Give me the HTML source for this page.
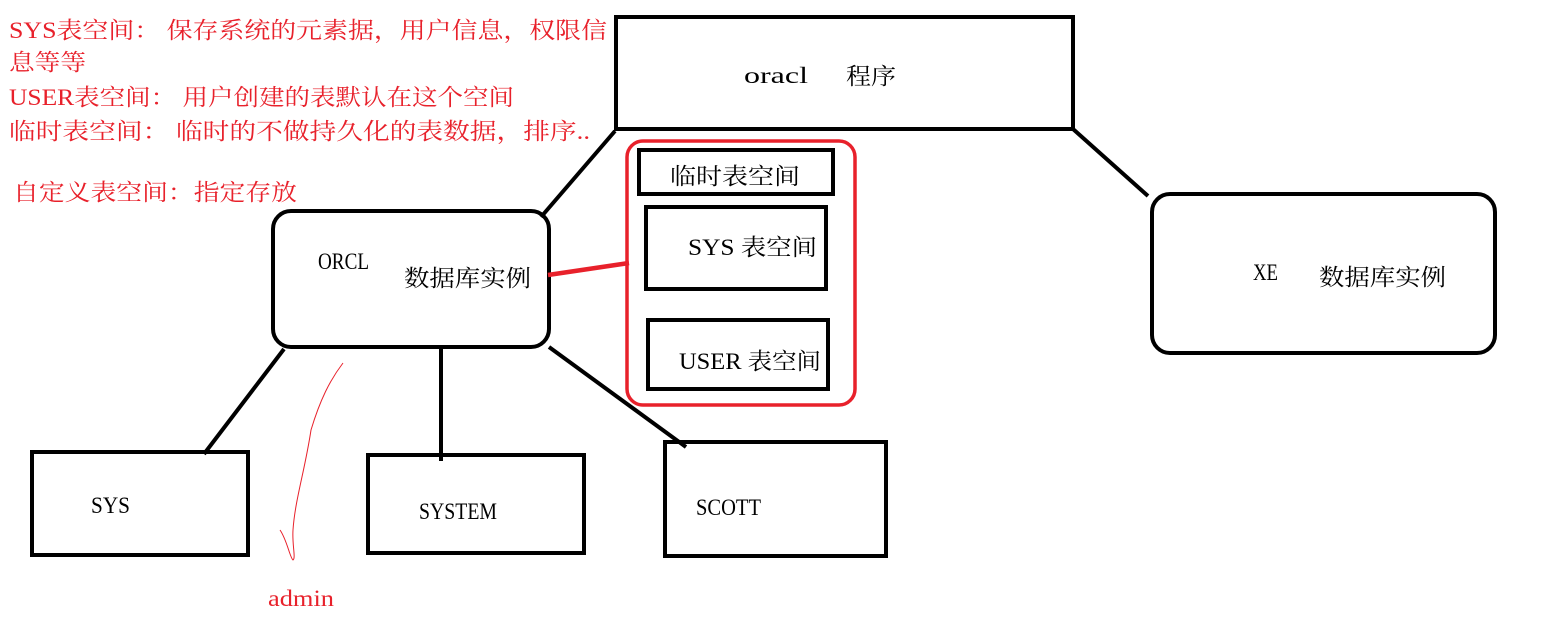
<html><body style="margin:0;background:#fff">
<svg width="1544" height="623" xmlns="http://www.w3.org/2000/svg" style="display:block">
<g fill="none" stroke="#000" stroke-width="4">
<rect x="616" y="17" width="457" height="112"/>
<rect x="273" y="211" width="276" height="136" rx="18"/>
<rect x="1152" y="194" width="343" height="159" rx="18"/>
<rect x="639" y="150" width="194" height="44"/>
<rect x="646" y="207" width="180" height="82"/>
<rect x="648" y="320" width="180" height="69"/>
<rect x="32" y="452" width="216" height="103"/>
<rect x="368" y="455" width="216" height="98"/>
<rect x="665" y="442" width="221" height="114"/>
<path d="M541 217L615 131M1073 129L1148 196M284 349L204 454M441 349L441 461M549 347L686 447"/>
</g>
<rect x="627" y="141" width="228" height="264" rx="16" fill="none" stroke="#e8212b" stroke-width="3.5"/>
<path d="M548 275L629 263" stroke="#e8212b" stroke-width="4.5"/>
<path d="M343 363C330 380 320 400 311 430C305 470 295 500 293 530C292 545 296 558 293 560C290 558 287 540 280 530" fill="none" stroke="#e8212b" stroke-width="1"/>
<g font-family="'Liberation Serif','Noto Serif CJK SC',serif" fill="#e8212b" font-size="23" lengthAdjust="spacingAndGlyphs">
<text x="9" y="38" textLength="598" lengthAdjust="spacingAndGlyphs">SYS表空间：  保存系统的元素据，用户信息，权限信</text>
<text x="9" y="70" textLength="77" lengthAdjust="spacingAndGlyphs">息等等</text>
<text x="9" y="105" textLength="505" lengthAdjust="spacingAndGlyphs">USER表空间：  用户创建的表默认在这个空间</text>
<text x="9" y="139" textLength="581" lengthAdjust="spacingAndGlyphs">临时表空间：  临时的不做持久化的表数据，排序..</text>
<text x="13" y="200" textLength="284" lengthAdjust="spacingAndGlyphs">自定义表空间：指定存放</text>
<text x="268" y="606" textLength="66" lengthAdjust="spacingAndGlyphs">admin</text>
</g>
<g font-family="'Liberation Serif','Noto Serif CJK SC',serif" fill="#000" font-size="23">
<text x="744" y="83" textLength="64" lengthAdjust="spacingAndGlyphs">oracl</text>
<text x="846" y="84" textLength="50" lengthAdjust="spacingAndGlyphs">程序</text>
<text x="318" y="269" textLength="51" lengthAdjust="spacingAndGlyphs">ORCL</text>
<text x="404" y="286" textLength="127" lengthAdjust="spacingAndGlyphs">数据库实例</text>
<text x="670" y="184" textLength="130" lengthAdjust="spacingAndGlyphs">临时表空间</text>
<text x="688" y="255" textLength="129" lengthAdjust="spacingAndGlyphs">SYS  表空间</text>
<text x="679" y="369" textLength="142" lengthAdjust="spacingAndGlyphs">USER  表空间</text>
<text x="1253" y="280" textLength="25" lengthAdjust="spacingAndGlyphs">XE</text>
<text x="1319" y="285" textLength="127" lengthAdjust="spacingAndGlyphs">数据库实例</text>
<text x="91" y="513" textLength="39" lengthAdjust="spacingAndGlyphs">SYS</text>
<text x="419" y="519" textLength="78" lengthAdjust="spacingAndGlyphs">SYSTEM</text>
<text x="696" y="515" textLength="65" lengthAdjust="spacingAndGlyphs">SCOTT</text>
</g>
</svg>
</body></html>
